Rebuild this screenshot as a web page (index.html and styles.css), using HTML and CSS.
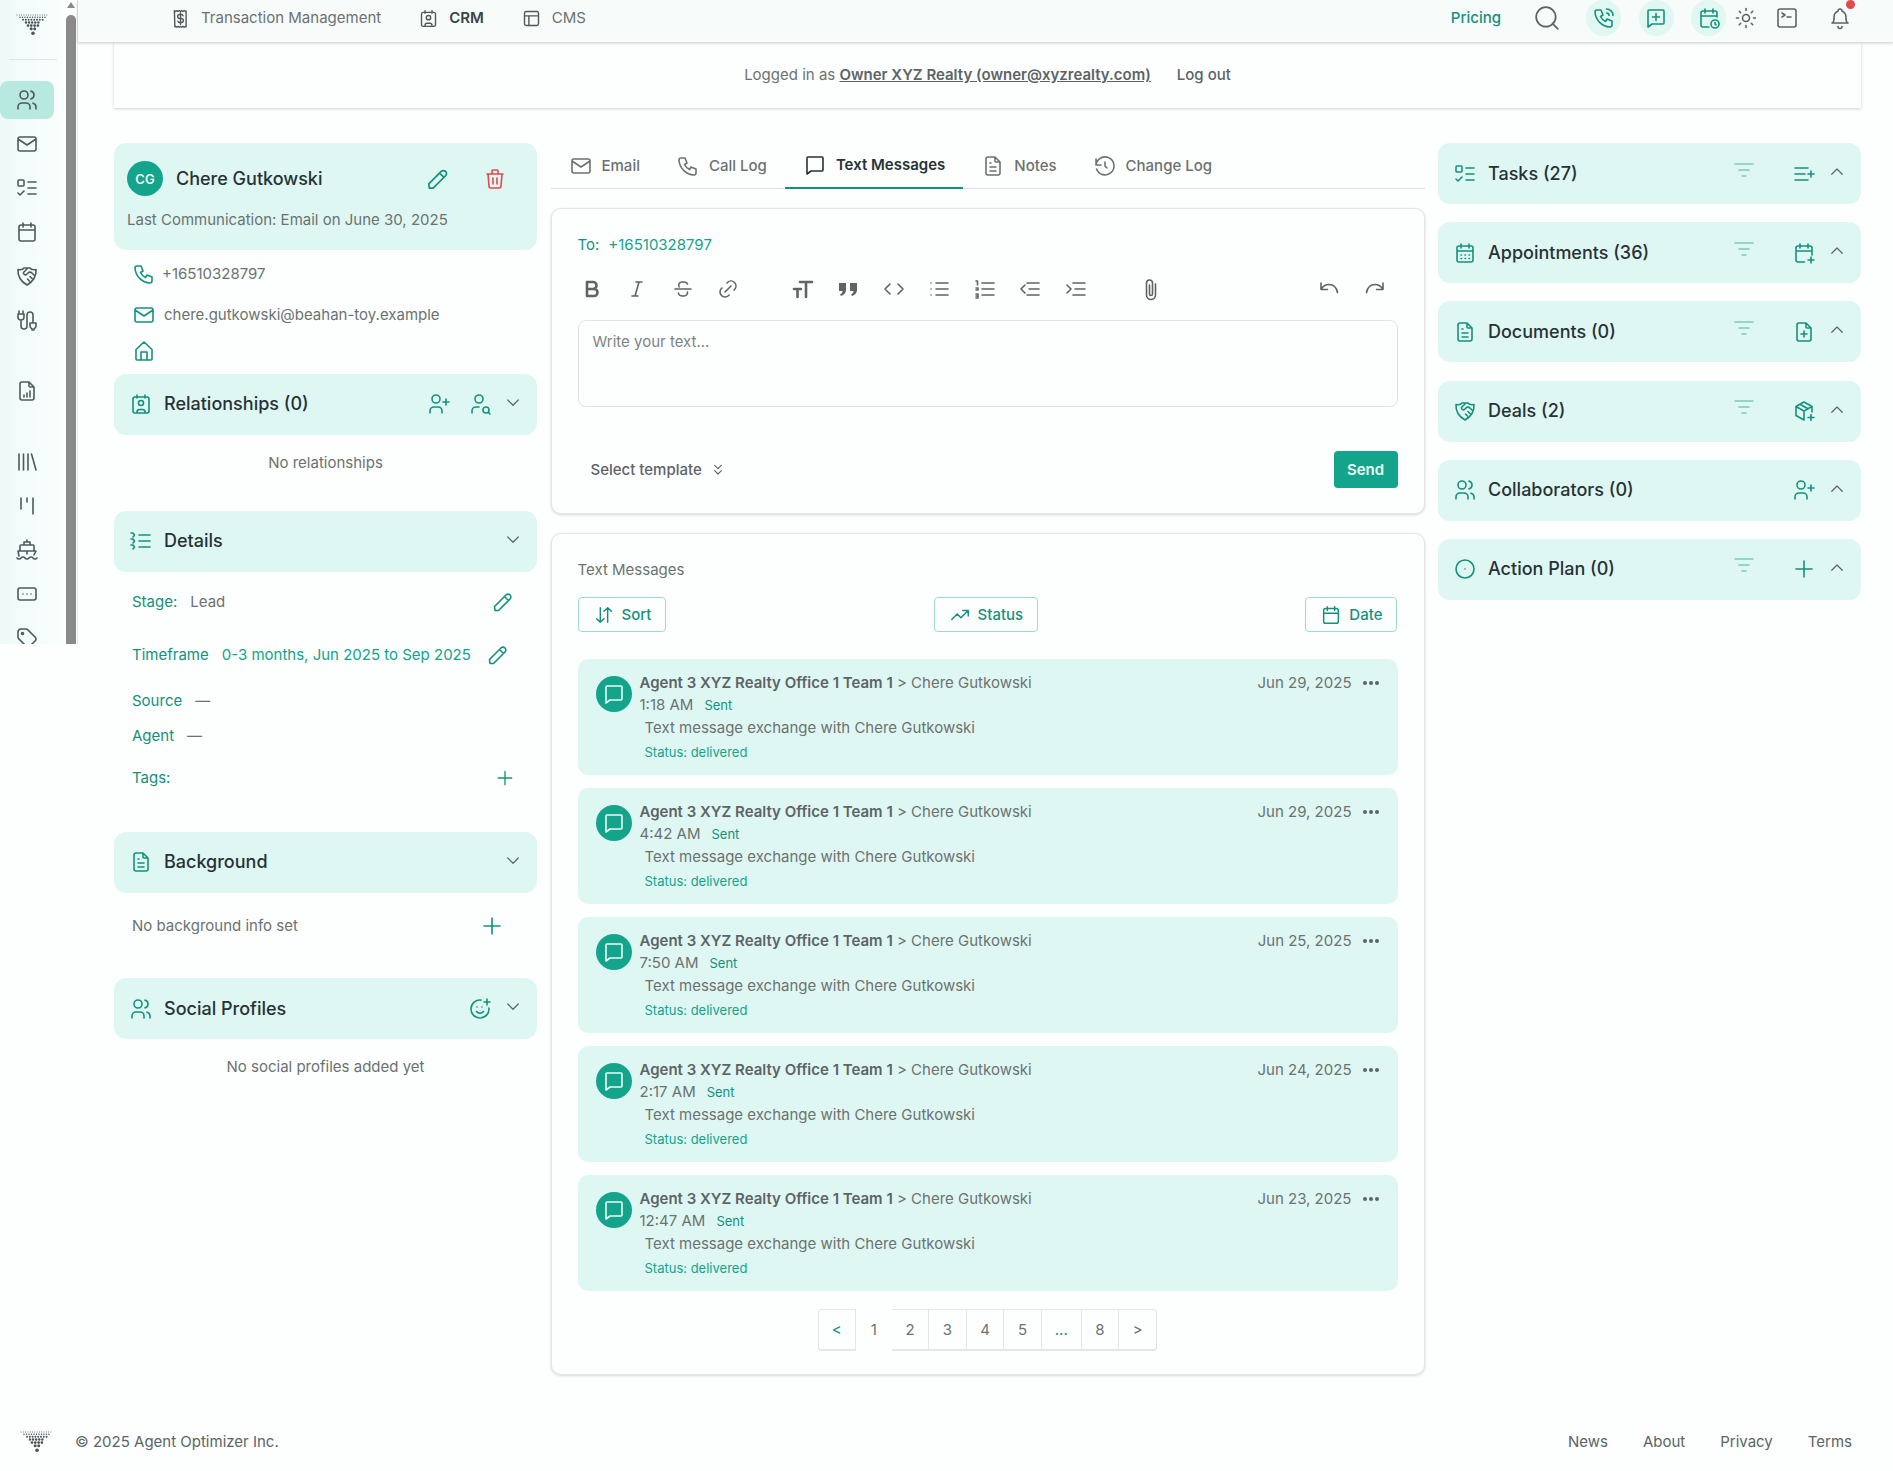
FILE: index.html
```html
<!DOCTYPE html>
<html lang="en">
<head>
    <meta charset="UTF-8">
    <meta name="viewport" content="width=device-width, initial-scale=1.0">
    <title>Chere Gutkowski - CRM</title>
    <link rel="stylesheet" href="styles.css">
</head>
<body>
    <!-- icon sprite -->
    <svg class="sprite" xmlns="http://www.w3.org/2000/svg">
        <symbol id="i-logo" viewBox="0 0 34 22">
            <g class="logo-dots">
                <path stroke-width="1" stroke-dasharray="0 2.3" d="M1 1H33"/>
                <path stroke-width="1.5" stroke-dasharray="0 2.5" d="M4 3.2H30"/>
                <path stroke-width="2" stroke-dasharray="0 2.8" d="M7 5.8H27.5"/>
                <path stroke-width="2.5" stroke-dasharray="0 3.1" d="M10 8.6H25"/>
                <path stroke-width="2.8" stroke-dasharray="0 3.3" d="M12 11.6H22.5"/>
                <path stroke-width="3" stroke-dasharray="0 3.5" d="M15.2 14.8H19"/>
                <path stroke-width="3.6" stroke-dasharray="0 4" d="M17 19.2H17.5"/>
            </g>
        </symbol>
        <symbol id="i-users" viewBox="0 0 24 24"><path d="M5 7a4 4 0 1 0 8 0a4 4 0 1 0 -8 0M3 21v-2a4 4 0 0 1 4 -4h4a4 4 0 0 1 4 4v2M16 3.13a4 4 0 0 1 0 7.75M21 21v-2a4 4 0 0 0 -3 -3.85"/></symbol>
        <symbol id="i-mail" viewBox="0 0 24 24"><path d="M3 7a2 2 0 0 1 2 -2h14a2 2 0 0 1 2 2v10a2 2 0 0 1 -2 2h-14a2 2 0 0 1 -2 -2v-10zM3 7l9 6l9 -6"/></symbol>
        <symbol id="i-tasks" viewBox="0 0 24 24"><path d="M4 4h4a1 1 0 0 1 1 1v4a1 1 0 0 1 -1 1h-4a1 1 0 0 1 -1 -1v-4a1 1 0 0 1 1 -1zM3 17l2 2l4 -4M13 6h8M13 12h8M13 18h8"/></symbol>
        <symbol id="i-calendar" viewBox="0 0 24 24"><path d="M4 7a2 2 0 0 1 2 -2h12a2 2 0 0 1 2 2v12a2 2 0 0 1 -2 2h-12a2 2 0 0 1 -2 -2v-12zM16 3v4M8 3v4M4 10h16"/></symbol>
        <symbol id="i-calendar-grid" viewBox="0 0 24 24"><path d="M4 7a2 2 0 0 1 2 -2h12a2 2 0 0 1 2 2v12a2 2 0 0 1 -2 2h-12a2 2 0 0 1 -2 -2v-12zM16 3v4M8 3v4M4 10h16M8 14h.5M12 14h.5M16 14h.5M8 17.500h.5M12 17.500h.5M16 17.500h.5"/></symbol>
        <symbol id="i-calendar-plus" viewBox="0 0 24 24"><path d="M12.500 21h-6.500a2 2 0 0 1 -2 -2v-12a2 2 0 0 1 2 -2h12a2 2 0 0 1 2 2v7M16 3v4M8 3v4M4 10h16M16 19h6M19 16v6"/></symbol>
        <symbol id="i-calendar-time" viewBox="0 0 24 24"><path d="M11.800 21h-5.800a2 2 0 0 1 -2 -2v-12a2 2 0 0 1 2 -2h12a2 2 0 0 1 2 2v4M14 18a4 4 0 1 0 8 0a4 4 0 1 0 -8 0M16 3v4M8 3v4M4 10h16M18 16.500v1.500l1 1"/></symbol>
        <symbol id="i-handshake" viewBox="0 0 24 24"><path d="M3 5.500c3 .5 5 0 6 -1.500h6c1 1.500 3 2 6 1.500c.5 7 -3 12 -9 15.500c-6 -3.500 -9.500 -8.500 -9 -15.500zM12 5l-3.300 3.300a1 1 0 0 0 0 1.400l.5 .5c.7 .7 1.800 .7 2.500 0l1 -1a3.200 3.200 0 0 1 4.500 0l1.800 1.800M12.500 15l2 2M15 12.500l2 2"/></symbol>
        <symbol id="i-route" viewBox="0 0 24 24"><path d="M4 3v3M8 3v3M3 6h6v3a3 3 0 0 1 -6 0zM6 12v6a3 3 0 0 0 6 0v-11a3 3 0 0 1 6 0v8M15 15h6v3a3 3 0 0 1 -2 2.800v1.200h-2v-1.200a3 3 0 0 1 -2 -2.800z"/></symbol>
        <symbol id="i-report" viewBox="0 0 24 24"><path d="M14 3v4a1 1 0 0 0 1 1h4M17 21h-10a2 2 0 0 1 -2 -2v-14a2 2 0 0 1 2 -2h7l5 5v11a2 2 0 0 1 -2 2zM9 18v-2M12 18v-4M15 18v-6"/></symbol>
        <symbol id="i-books" viewBox="0 0 24 24"><path d="M4 4v16M8.500 4v16M13 4v16M16.500 4l4.500 16"/></symbol>
        <symbol id="i-kanban" viewBox="0 0 24 24"><path d="M6 4v11M12 4v4M18 4v16"/></symbol>
        <symbol id="i-ship" viewBox="0 0 24 24"><path d="M2 20a2.400 2.400 0 0 0 2 1a2.400 2.400 0 0 0 2 -1a2.400 2.400 0 0 1 2 -1a2.400 2.400 0 0 1 2 1a2.400 2.400 0 0 0 2 1a2.400 2.400 0 0 0 2 -1a2.400 2.400 0 0 1 2 -1a2.400 2.400 0 0 1 2 1a2.400 2.400 0 0 0 2 1a2.400 2.400 0 0 0 2 -1M4 18l-1 -5h18l-2 4M5 13v-5a1 1 0 0 1 1 -1h12a1 1 0 0 1 1 1v5M9 7v-3h6v3M12 2v2M12 13v3"/></symbol>
        <symbol id="i-ticket" viewBox="0 0 24 24"><path d="M5 6h14a2 2 0 0 1 2 2v8a2 2 0 0 1 -2 2h-14a2 2 0 0 1 -2 -2v-8a2 2 0 0 1 2 -2zM8 12h.01M12 12h.01M16 12h.01"/></symbol>
        <symbol id="i-tag" viewBox="0 0 24 24"><path d="M6.500 7.500a1 1 0 1 0 2 0a1 1 0 1 0 -2 0M3 6v5.170a2 2 0 0 0 .590 1.410l7.710 7.710a2.410 2.410 0 0 0 3.410 0l5.590 -5.590a2.410 2.410 0 0 0 0 -3.410l-7.710 -7.710a2 2 0 0 0 -1.410 -.590h-5.170a3 3 0 0 0 -3 3z"/></symbol>
        <symbol id="i-receipt" viewBox="0 0 24 24"><path d="M5 3l1.400 1l1.400 -1l1.400 1l1.400 -1l1.400 1l1.400 -1l1.400 1l1.400 -1l1.400 1l.8 -.5v18l-.8 -.5l-1.400 1l-1.400 -1l-1.400 1l-1.400 -1l-1.400 1l-1.400 -1l-1.400 1l-1.400 -1l-.8 .5zM15 9a2 2 0 0 0 -2 -1.500h-2a2.200 2.200 0 0 0 0 4.500h2a2.200 2.200 0 0 1 0 4.500h-2a2 2 0 0 1 -2 -1.500M12 5.500v13"/></symbol>
        <symbol id="i-badge" viewBox="0 0 24 24"><path d="M6 5h12a2 2 0 0 1 2 2v12a2 2 0 0 1 -2 2h-12a2 2 0 0 1 -2 -2v-12a2 2 0 0 1 2 -2zM8 3v3M16 3v3M9.500 11a2.500 2.500 0 1 0 5 0a2.500 2.500 0 1 0 -5 0M8 21v-1a2.500 2.500 0 0 1 2.500 -2.500h3a2.500 2.500 0 0 1 2.500 2.500v1"/></symbol>
        <symbol id="i-layout" viewBox="0 0 24 24"><path d="M6 4h12a2 2 0 0 1 2 2v12a2 2 0 0 1 -2 2h-12a2 2 0 0 1 -2 -2v-12a2 2 0 0 1 2 -2zM4 9h16M9 9v11"/></symbol>
        <symbol id="i-search" viewBox="0 0 24 24"><path d="M2 11a9 9 0 1 0 18 0a9 9 0 1 0 -18 0M22 22l-5 -5"/></symbol>
        <symbol id="i-phone" viewBox="0 0 24 24"><path d="M5 4h4l2 5l-2.500 1.500a11 11 0 0 0 5 5l1.500 -2.500l5 2v4a2 2 0 0 1 -2 2a16 16 0 0 1 -15 -15a2 2 0 0 1 2 -2"/></symbol>
        <symbol id="i-phone-calling" viewBox="0 0 24 24"><path d="M5 4h4l2 5l-2.500 1.500a11 11 0 0 0 5 5l1.500 -2.500l5 2v4a2 2 0 0 1 -2 2a16 16 0 0 1 -15 -15a2 2 0 0 1 2 -2M14.500 3a6.500 6.500 0 0 1 6.500 6.500M14.500 7a2.500 2.500 0 0 1 2.500 2.500"/></symbol>
        <symbol id="i-message-plus" viewBox="0 0 24 24"><path d="M5 4h14a1 1 0 0 1 1 1v12a1 1 0 0 1 -1 1h-11l-4 3v-16a1 1 0 0 1 1 -1zM8.500 11h7M12 7.500v7"/></symbol>
        <symbol id="i-message" viewBox="0 0 24 24"><path d="M5 4h14a1 1 0 0 1 1 1v12a1 1 0 0 1 -1 1h-11l-4 3v-16a1 1 0 0 1 1 -1z"/></symbol>
        <symbol id="i-sun" viewBox="0 0 24 24"><path d="M8.500 12a3.500 3.500 0 1 0 7 0a3.500 3.500 0 1 0 -7 0M2.500 12h2M19.500 12h2M12 2.500v2M12 19.500v2M5.300 5.300l1.400 1.400M17.300 17.300l1.400 1.400M18.700 5.300l-1.400 1.400M6.700 17.300l-1.400 1.400"/></symbol>
        <symbol id="i-terminal" viewBox="0 0 24 24"><path d="M5 3h14a2 2 0 0 1 2 2v14a2 2 0 0 1 -2 2h-14a2 2 0 0 1 -2 -2v-14a2 2 0 0 1 2 -2zM7 7l3 2l-3 2M12 11h4"/></symbol>
        <symbol id="i-bell" viewBox="0 0 24 24"><path d="M10 5a2 2 0 1 1 4 0a7 7 0 0 1 4 6v3a4 4 0 0 0 2 3h-16a4 4 0 0 0 2 -3v-3a7 7 0 0 1 4 -6M10 20.500a2 2 0 0 0 4 0"/></symbol>
        <symbol id="i-pencil" viewBox="0 0 24 24"><path d="M4 20.500h3.500l11.500 -11.500a2.828 2.828 0 1 0 -4 -4l-11.500 11.500zM13.500 6.500l4 4"/></symbol>
        <symbol id="i-trash" viewBox="0 0 24 24"><path d="M4 7h16M10 11v6M14 11v6M5 7l1 12a2 2 0 0 0 2 2h8a2 2 0 0 0 2 -2l1 -12M9 7v-3a1 1 0 0 1 1 -1h4a1 1 0 0 1 1 1v3"/></symbol>
        <symbol id="i-home" viewBox="0 0 24 24"><path d="M4 10.500l8 -7.500l8 7.500v9.500a1 1 0 0 1 -1 1h-14a1 1 0 0 1 -1 -1zM9 21v-8h6v8"/></symbol>
        <symbol id="i-user-plus" viewBox="0 0 24 24"><path d="M5 7a4 4 0 1 0 8 0a4 4 0 1 0 -8 0M3 21v-2a4 4 0 0 1 4 -4h4a4 4 0 0 1 4 4v2M19 7v6M16 10h6"/></symbol>
        <symbol id="i-user-search" viewBox="0 0 24 24"><path d="M7 7a4 4 0 1 0 8 0a4 4 0 1 0 -8 0M4 21v-2a4 4 0 0 1 4 -4h3M15 18a3 3 0 1 0 6 0a3 3 0 1 0 -6 0M20.200 20.200l1.800 1.800"/></symbol>
        <symbol id="i-chevron-down" viewBox="0 0 24 24"><path d="M5 8l7 7l7 -7"/></symbol>
        <symbol id="i-chevron-up" viewBox="0 0 24 24"><path d="M5 15l7 -7l7 7"/></symbol>
        <symbol id="i-chevrons-down" viewBox="0 0 24 24"><path d="M7 5l5 5l5 -5M7 13l5 5l5 -5"/></symbol>
        <symbol id="i-list-numbers" viewBox="0 0 24 24"><path d="M10 6h11M10 12h11M10 18h11M2 4h2l1.500 2l-1.500 2M2 10h2l1.500 2l-1.500 2M2 16h2l1.500 2l-1.500 2"/></symbol>
        <symbol id="i-file" viewBox="0 0 24 24"><path d="M14 3v4a1 1 0 0 0 1 1h4M17 21h-10a2 2 0 0 1 -2 -2v-14a2 2 0 0 1 2 -2h7l5 5v11a2 2 0 0 1 -2 2zM9 9h1M9 13h6M9 17h6"/></symbol>
        <symbol id="i-file-plus" viewBox="0 0 24 24"><path d="M14 3v4a1 1 0 0 0 1 1h4M17 21h-10a2 2 0 0 1 -2 -2v-14a2 2 0 0 1 2 -2h7l5 5v11a2 2 0 0 1 -2 2zM12 11v6M9 14h6"/></symbol>
        <symbol id="i-mood-plus" viewBox="0 0 24 24"><path d="M13 3.100a9 9 0 1 0 7.900 7.900M9 10h.01M14 10h.01M8.500 14.500c.8 1.100 2.100 1.800 3.500 1.800s2.700 -.7 3.500 -1.800M16 5h6M19 2v6"/></symbol>
        <symbol id="i-filter" viewBox="0 0 24 24"><path d="M3 5h18M7 11h10M10 17h4"/></symbol>
        <symbol id="i-list-plus" viewBox="0 0 24 24"><path d="M3 6h13M3 12h10M3 18h13M16 12h6M19 9v6"/></symbol>
        <symbol id="i-package-plus" viewBox="0 0 24 24"><path d="M20 13v-5.500l-8 -4.500l-8 4.500v9l8 4.500M4 7.500l8 4.500l8 -4.500M12 12v9M8 5.200l8 4.500M16 18.500h6M19 15.500v6"/></symbol>
        <symbol id="i-circle-dot" viewBox="0 0 24 24"><path d="M3 12a9 9 0 1 0 18 0a9 9 0 1 0 -18 0M12 12h.01"/></symbol>
        <symbol id="i-plus" viewBox="0 0 24 24"><path d="M12 4v16M4 12h16"/></symbol>
        <symbol id="i-history" viewBox="0 0 24 24"><path d="M12 8v4l2 2M3.050 11a9 9 0 1 1 .5 4M3.050 5v6h5"/></symbol>
        <symbol id="i-bold" viewBox="0 0 24 24"><path d="M7 5h6a3.500 3.500 0 0 1 0 7h-6zM13 12h1a3.500 3.500 0 0 1 0 7h-7v-7"/></symbol>
        <symbol id="i-italic" viewBox="0 0 24 24"><path d="M11 5h6M7 19h6M14 5l-4 14"/></symbol>
        <symbol id="i-strike" viewBox="0 0 24 24"><path d="M4 12h16M16.500 7a4 2.500 0 0 0 -4 -2h-1.500a3.500 3.500 0 0 0 -3 5M7.500 16a4 3 0 0 0 4 3h1.500a3.500 3.500 0 0 0 3.500 -4"/></symbol>
        <symbol id="i-link" viewBox="0 0 24 24"><path d="M9 15l6 -6M11 6l.46 -.54a5 5 0 0 1 7.070 7.070l-.53 .47M13 18l-.4 .53a5.070 5.070 0 0 1 -7.130 0a4.970 4.970 0 0 1 0 -7.070l.53 -.46"/></symbol>
        <symbol id="i-text-size" viewBox="0 0 24 24"><path d="M9 5h12M15 5v15M3 12h7M6.500 12v8"/></symbol>
        <symbol id="i-quote" viewBox="0 0 24 24"><path class="solid" d="M3 6h7v7c0 3 -2 5 -5 6l-1 -1.500c1.500 -.7 2.500 -1.800 2.500 -3.500h-3.500zM14 6h7v7c0 3 -2 5 -5 6l-1 -1.500c1.500 -.7 2.500 -1.800 2.500 -3.500h-3.500z"/></symbol>
        <symbol id="i-code" viewBox="0 0 24 24"><path d="M8 7l-5 5l5 5M16 7l5 5l-5 5"/></symbol>
        <symbol id="i-ul" viewBox="0 0 24 24"><path d="M9 6h12M9 12h12M9 18h12M4 6h.01M4 12h.01M4 18h.01"/></symbol>
        <symbol id="i-ol" viewBox="0 0 24 24"><path d="M9 6h12M9 12h12M9 18h12M3 4h1.500v4M3 11h2v2h-2M3 17h2v4h-2M3 19h2"/></symbol>
        <symbol id="i-outdent" viewBox="0 0 24 24"><path d="M21 6h-12M21 12h-10M21 18h-12M7 8l-4 4l4 4"/></symbol>
        <symbol id="i-indent" viewBox="0 0 24 24"><path d="M21 6h-12M21 12h-10M21 18h-12M3 8l4 4l-4 4"/></symbol>
        <symbol id="i-clip" viewBox="0 0 24 24"><path d="M10.500 8v9a1.500 1.500 0 0 0 3 0v-11a3 3 0 0 0 -6 0v12a4.500 4.500 0 0 0 9 0v-11"/></symbol>
        <symbol id="i-undo" viewBox="0 0 24 24"><path d="M4 6v6.500h6.500M4 12.500c2 -3.500 5 -5 8 -5c4.500 0 7.500 3 8.500 8"/></symbol>
        <symbol id="i-redo" viewBox="0 0 24 24"><path d="M20 6v6.500h-6.500M20 12.500c-2 -3.500 -5 -5 -8 -5c-4.500 0 -7.500 3 -8.500 8"/></symbol>
        <symbol id="i-sort" viewBox="0 0 24 24"><path d="M8 4v16M4 16l4 4l4 -4M16 20v-16M12 8l4 -4l4 4"/></symbol>
        <symbol id="i-trend" viewBox="0 0 24 24"><path d="M3 17l6 -6l4 4l8 -8M15 7h6v6"/></symbol>
    </svg>

    <div class="app">
        <aside class="sidebar">
            <div class="side-rail">
                <div class="side-logo">
                    <svg class="logo"><use href="#i-logo"/></svg>
                </div>
                <nav class="side-nav">
                    <a class="side-item active"><svg class="icon"><use href="#i-users"/></svg></a>
                    <a class="side-item"><svg class="icon"><use href="#i-mail"/></svg></a>
                    <a class="side-item"><svg class="icon"><use href="#i-tasks"/></svg></a>
                    <a class="side-item"><svg class="icon"><use href="#i-calendar"/></svg></a>
                    <a class="side-item"><svg class="icon"><use href="#i-handshake"/></svg></a>
                    <a class="side-item"><svg class="icon"><use href="#i-route"/></svg></a>
                    <a class="side-item group-a"><svg class="icon"><use href="#i-report"/></svg></a>
                    <a class="side-item group-b"><svg class="icon"><use href="#i-books"/></svg></a>
                    <a class="side-item"><svg class="icon"><use href="#i-kanban"/></svg></a>
                    <a class="side-item"><svg class="icon"><use href="#i-ship"/></svg></a>
                    <a class="side-item"><svg class="icon"><use href="#i-ticket"/></svg></a>
                    <a class="side-item"><svg class="icon"><use href="#i-tag"/></svg></a>
                </nav>
            </div>
            <div class="side-scroll"><span class="scroll-arrow"></span><span class="scroll-thumb"></span></div>
        </aside>

        <div class="main">
            <header class="topbar">
                <nav class="top-nav">
                    <a class="top-link"><svg class="icon"><use href="#i-receipt"/></svg>Transaction Management</a>
                    <a class="top-link current"><svg class="icon"><use href="#i-badge"/></svg>CRM</a>
                    <a class="top-link"><svg class="icon"><use href="#i-layout"/></svg>CMS</a>
                </nav>
                <div class="top-actions">
                    <a class="pricing">Pricing</a>
                    <svg class="icon search-icon"><use href="#i-search"/></svg>
                    <span class="round-btn"><svg class="icon"><use href="#i-phone-calling"/></svg></span>
                    <span class="round-btn"><svg class="icon"><use href="#i-message-plus"/></svg></span>
                    <span class="round-btn"><svg class="icon"><use href="#i-calendar-time"/></svg></span>
                    <svg class="icon sun-icon"><use href="#i-sun"/></svg>
                    <svg class="icon term-icon"><use href="#i-terminal"/></svg>
                    <span class="bell"><svg class="icon"><use href="#i-bell"/></svg><span class="bell-dot"></span></span>
                </div>
            </header>

            <div class="login-bar">
                <span>Logged in as <a class="login-user">Owner XYZ Realty (owner@xyzrealty.com)</a></span>
                <a class="logout">Log out</a>
            </div>

            <div class="columns">
                <!-- left column -->
                <section class="col">
                    <div class="profile">
                        <div class="profile-top">
                            <span class="avatar">CG</span>
                            <h1 class="profile-name">Chere Gutkowski</h1>
                            <svg class="icon act pencil"><use href="#i-pencil"/></svg>
                            <svg class="icon act trash"><use href="#i-trash"/></svg>
                        </div>
                        <p class="last-comm">Last Communication: Email on June 30, 2025</p>
                    </div>
                    <div class="contact">
                        <div class="contact-row phone"><svg class="icon act"><use href="#i-phone"/></svg>+16510328797</div>
                        <div class="contact-row mail"><svg class="icon act"><use href="#i-mail"/></svg>chere.gutkowski@beahan-toy.example</div>
                        <div class="contact-row home"><svg class="icon act"><use href="#i-home"/></svg></div>
                    </div>

                    <div class="panel-head">
                        <svg class="icon act head-icon"><use href="#i-badge"/></svg>
                        <h2 class="panel-title">Relationships (0)</h2>
                        <svg class="icon act tool"><use href="#i-user-plus"/></svg>
                        <svg class="icon act tool"><use href="#i-user-search"/></svg>
                        <svg class="icon chev"><use href="#i-chevron-down"/></svg>
                    </div>
                    <p class="empty rel-empty">No relationships</p>

                    <div class="panel-head">
                        <svg class="icon act head-icon"><use href="#i-list-numbers"/></svg>
                        <h2 class="panel-title">Details</h2>
                        <svg class="icon chev"><use href="#i-chevron-down"/></svg>
                    </div>
                    <div class="details">
                        <div class="detail stage"><span class="label">Stage:</span><span class="value">Lead</span><svg class="icon act edit"><use href="#i-pencil"/></svg></div>
                        <div class="detail frame"><span class="label">Timeframe</span><span class="value teal">0-3 months, Jun 2025 to Sep 2025</span><svg class="icon act edit"><use href="#i-pencil"/></svg></div>
                        <div class="detail source"><span class="label">Source</span><span class="value">—</span></div>
                        <div class="detail agent"><span class="label">Agent</span><span class="value">—</span></div>
                        <div class="detail tags"><span class="label">Tags:</span><svg class="icon act tag-add"><use href="#i-plus"/></svg></div>
                    </div>

                    <div class="panel-head">
                        <svg class="icon act head-icon"><use href="#i-file"/></svg>
                        <h2 class="panel-title">Background</h2>
                        <svg class="icon chev"><use href="#i-chevron-down"/></svg>
                    </div>
                    <div class="bg-info">
                        <span>No background info set</span>
                        <svg class="icon act bg-add"><use href="#i-plus"/></svg>
                    </div>

                    <div class="panel-head">
                        <svg class="icon act head-icon"><use href="#i-users"/></svg>
                        <h2 class="panel-title">Social Profiles</h2>
                        <svg class="icon act tool"><use href="#i-mood-plus"/></svg>
                        <svg class="icon chev"><use href="#i-chevron-down"/></svg>
                    </div>
                    <p class="empty">No social profiles added yet</p>
                </section>

                <!-- middle column -->
                <section class="col">
                    <nav class="tabs">
                        <a class="tab"><svg class="icon"><use href="#i-mail"/></svg>Email</a>
                        <a class="tab"><svg class="icon"><use href="#i-phone"/></svg>Call Log</a>
                        <a class="tab active"><svg class="icon"><use href="#i-message"/></svg>Text Messages</a>
                        <a class="tab"><svg class="icon"><use href="#i-file"/></svg>Notes</a>
                        <a class="tab"><svg class="icon"><use href="#i-history"/></svg>Change Log</a>
                    </nav>

                    <div class="card compose">
                        <div class="to-line">To:<span>+16510328797</span></div>
                        <div class="toolbar">
                            <svg class="icon tb bold"><use href="#i-bold"/></svg>
                            <svg class="icon tb"><use href="#i-italic"/></svg>
                            <svg class="icon tb"><use href="#i-strike"/></svg>
                            <svg class="icon tb"><use href="#i-link"/></svg>
                            <svg class="icon tb bold group-start"><use href="#i-text-size"/></svg>
                            <svg class="icon tb"><use href="#i-quote"/></svg>
                            <svg class="icon tb"><use href="#i-code"/></svg>
                            <svg class="icon tb"><use href="#i-ul"/></svg>
                            <svg class="icon tb"><use href="#i-ol"/></svg>
                            <svg class="icon tb"><use href="#i-outdent"/></svg>
                            <svg class="icon tb"><use href="#i-indent"/></svg>
                            <svg class="icon tb clip"><use href="#i-clip"/></svg>
                            <svg class="icon tb undo"><use href="#i-undo"/></svg>
                            <svg class="icon tb"><use href="#i-redo"/></svg>
                        </div>
                        <div class="textbox">Write your text...</div>
                        <div class="compose-foot">
                            <a class="template">Select template<svg class="icon"><use href="#i-chevrons-down"/></svg></a>
                            <button class="send">Send</button>
                        </div>
                    </div>

                    <div class="card list-card">
                        <div class="list-title">Text Messages</div>
                        <div class="filters">
                            <button class="filter-btn"><svg class="icon"><use href="#i-sort"/></svg>Sort</button>
                            <button class="filter-btn"><svg class="icon"><use href="#i-trend"/></svg>Status</button>
                            <button class="filter-btn"><svg class="icon"><use href="#i-calendar"/></svg>Date</button>
                        </div>
                        <div class="msgs">
                            <article class="msg">
                                <span class="msg-avatar"><svg class="icon"><use href="#i-message"/></svg></span>
                                <div class="msg-main">
                                    <div class="msg-top"><span class="msg-from"><b>Agent 3 XYZ Realty Office 1 Team 1</b> &gt; Chere Gutkowski</span><span class="msg-date">Jun 29, 2025</span><span class="dots"><i></i><i></i><i></i></span></div>
                                    <div class="msg-time">1:18 AM<span>Sent</span></div>
                                    <p class="msg-body">Text message exchange with Chere Gutkowski</p>
                                    <p class="msg-status">Status: delivered</p>
                                </div>
                            </article>
                            <article class="msg">
                                <span class="msg-avatar"><svg class="icon"><use href="#i-message"/></svg></span>
                                <div class="msg-main">
                                    <div class="msg-top"><span class="msg-from"><b>Agent 3 XYZ Realty Office 1 Team 1</b> &gt; Chere Gutkowski</span><span class="msg-date">Jun 29, 2025</span><span class="dots"><i></i><i></i><i></i></span></div>
                                    <div class="msg-time">4:42 AM<span>Sent</span></div>
                                    <p class="msg-body">Text message exchange with Chere Gutkowski</p>
                                    <p class="msg-status">Status: delivered</p>
                                </div>
                            </article>
                            <article class="msg">
                                <span class="msg-avatar"><svg class="icon"><use href="#i-message"/></svg></span>
                                <div class="msg-main">
                                    <div class="msg-top"><span class="msg-from"><b>Agent 3 XYZ Realty Office 1 Team 1</b> &gt; Chere Gutkowski</span><span class="msg-date">Jun 25, 2025</span><span class="dots"><i></i><i></i><i></i></span></div>
                                    <div class="msg-time">7:50 AM<span>Sent</span></div>
                                    <p class="msg-body">Text message exchange with Chere Gutkowski</p>
                                    <p class="msg-status">Status: delivered</p>
                                </div>
                            </article>
                            <article class="msg">
                                <span class="msg-avatar"><svg class="icon"><use href="#i-message"/></svg></span>
                                <div class="msg-main">
                                    <div class="msg-top"><span class="msg-from"><b>Agent 3 XYZ Realty Office 1 Team 1</b> &gt; Chere Gutkowski</span><span class="msg-date">Jun 24, 2025</span><span class="dots"><i></i><i></i><i></i></span></div>
                                    <div class="msg-time">2:17 AM<span>Sent</span></div>
                                    <p class="msg-body">Text message exchange with Chere Gutkowski</p>
                                    <p class="msg-status">Status: delivered</p>
                                </div>
                            </article>
                            <article class="msg">
                                <span class="msg-avatar"><svg class="icon"><use href="#i-message"/></svg></span>
                                <div class="msg-main">
                                    <div class="msg-top"><span class="msg-from"><b>Agent 3 XYZ Realty Office 1 Team 1</b> &gt; Chere Gutkowski</span><span class="msg-date">Jun 23, 2025</span><span class="dots"><i></i><i></i><i></i></span></div>
                                    <div class="msg-time">12:47 AM<span>Sent</span></div>
                                    <p class="msg-body">Text message exchange with Chere Gutkowski</p>
                                    <p class="msg-status">Status: delivered</p>
                                </div>
                            </article>
                        </div>
                        <div class="pager">
                            <a class="page prev">&lt;</a>
                            <a class="page now">1</a>
                            <a class="page">2</a>
                            <a class="page">3</a>
                            <a class="page">4</a>
                            <a class="page">5</a>
                            <a class="page gap">...</a>
                            <a class="page">8</a>
                            <a class="page next">&gt;</a>
                        </div>
                    </div>
                </section>

                <!-- right column -->
                <section class="col side-list">
                    <div class="panel-head">
                        <svg class="icon act head-icon"><use href="#i-tasks"/></svg>
                        <h2 class="panel-title">Tasks (27)</h2>
                        <svg class="icon filter"><use href="#i-filter"/></svg>
                        <svg class="icon act add"><use href="#i-list-plus"/></svg>
                        <svg class="icon chev"><use href="#i-chevron-up"/></svg>
                    </div>
                    <div class="panel-head">
                        <svg class="icon act head-icon"><use href="#i-calendar-grid"/></svg>
                        <h2 class="panel-title">Appointments (36)</h2>
                        <svg class="icon filter"><use href="#i-filter"/></svg>
                        <svg class="icon act add"><use href="#i-calendar-plus"/></svg>
                        <svg class="icon chev"><use href="#i-chevron-up"/></svg>
                    </div>
                    <div class="panel-head">
                        <svg class="icon act head-icon"><use href="#i-file"/></svg>
                        <h2 class="panel-title">Documents (0)</h2>
                        <svg class="icon filter"><use href="#i-filter"/></svg>
                        <svg class="icon act add"><use href="#i-file-plus"/></svg>
                        <svg class="icon chev"><use href="#i-chevron-up"/></svg>
                    </div>
                    <div class="panel-head">
                        <svg class="icon act head-icon"><use href="#i-handshake"/></svg>
                        <h2 class="panel-title">Deals (2)</h2>
                        <svg class="icon filter"><use href="#i-filter"/></svg>
                        <svg class="icon act add"><use href="#i-package-plus"/></svg>
                        <svg class="icon chev"><use href="#i-chevron-up"/></svg>
                    </div>
                    <div class="panel-head">
                        <svg class="icon act head-icon"><use href="#i-users"/></svg>
                        <h2 class="panel-title">Collaborators (0)</h2>
                        <svg class="icon act add"><use href="#i-user-plus"/></svg>
                        <svg class="icon chev"><use href="#i-chevron-up"/></svg>
                    </div>
                    <div class="panel-head">
                        <svg class="icon act head-icon"><use href="#i-circle-dot"/></svg>
                        <h2 class="panel-title">Action Plan (0)</h2>
                        <svg class="icon filter"><use href="#i-filter"/></svg>
                        <svg class="icon act add"><use href="#i-plus"/></svg>
                        <svg class="icon chev"><use href="#i-chevron-up"/></svg>
                    </div>
                </section>
            </div>
        </div>
    </div>

    <footer class="footer">
        <svg class="logo foot-logo"><use href="#i-logo"/></svg>
        <span class="copy">© 2025 Agent Optimizer Inc.</span>
        <nav class="foot-links">
            <a>News</a>
            <a>About</a>
            <a>Privacy</a>
            <a>Terms</a>
        </nav>
    </footer>
</body>
</html>
```

FILE: styles.css
```css
* {
    box-sizing: border-box;
}

body {
    margin: 0;
    height: 1471px;
    overflow: hidden;
    background: #fcfffe;
    color: #6b7270;
    font-family: Inter, "Noto Sans", sans-serif;
    font-size: 15px;
    line-height: 20px;
}

h1, h2, p {
    margin: 0;
    font: inherit;
}

.sprite {
    display: none;
}

.icon {
    display: block;
    flex: none;
    width: 24px;
    height: 24px;
    fill: none;
    stroke: currentColor;
    stroke-width: 1.6;
    stroke-linecap: round;
    stroke-linejoin: round;
}

.solid {
    fill: currentColor;
    stroke: none;
}

.logo {
    display: block;
    width: 34px;
    height: 22px;
}

.logo-dots {
    fill: none;
    stroke: #4a5358;
    stroke-linecap: round;
}

.act {
    color: #14917c;
}

.app {
    display: flex;
    height: 1420px;
}

/* sidebar */
.sidebar {
    display: flex;
    flex: none;
    width: 78px;
    height: 644px;
    border-right: 1px solid #e6eaea;
}

.side-rail {
    width: 66px;
    background: linear-gradient(90deg, #eefaf8, #fbfffe);
    overflow: hidden;
}

.side-logo {
    height: 60px;
    margin: 0 9px 18px;
    padding-top: 14px;
    border-bottom: 1px solid #dfe5e4;
    display: flex;
    justify-content: center;
}

.side-nav {
    display: flex;
    flex-direction: column;
}

.side-item {
    display: flex;
    align-items: center;
    justify-content: center;
    width: 54px;
    height: 44px;
    color: #4e5a5c;
}

.side-item.active {
    height: 38px;
    margin: 3px 0;
    background: #b8e9e0;
    border-radius: 8px;
}

.side-item.group-a {
    margin-top: 27px;
}

.side-item.group-b {
    margin-top: 27px;
}

.side-scroll {
    position: relative;
    width: 10px;
}

.scroll-arrow {
    position: absolute;
    top: 2px;
    left: 1px;
    border: 4px solid transparent;
    border-top: 0;
    border-bottom: 6px solid #8a8a8a;
}

.scroll-thumb {
    position: absolute;
    top: 15px;
    bottom: 0;
    left: 0;
    width: 10px;
    background: #8a8a8a;
    border-radius: 5px 5px 0 0;
}

/* top bar */
.main {
    flex: 1;
    min-width: 0;
}

.topbar {
    position: relative;
    z-index: 2;
    display: flex;
    align-items: center;
    height: 42px;
    padding: 0 41px 6px 92px;
    background: #f7fbfa;
    box-shadow: 0 1px 3px rgba(0, 0, 0, 0.22);
}

.top-nav {
    display: flex;
    gap: 37px;
}

.top-link {
    display: flex;
    align-items: center;
    gap: 10px;
    color: #6b7270;
}

.top-link .icon {
    width: 21px;
    height: 21px;
    color: #4e5a5c;
}

.top-link.current {
    color: #3a4447;
    font-weight: 600;
}

.top-actions {
    display: flex;
    align-items: center;
    margin-left: auto;
}

.pricing {
    color: #14917c;
    font-weight: 500;
    margin-right: 33px;
}

.search-icon {
    width: 26px;
    height: 26px;
    margin-right: 26px;
    color: #5c6466;
}

.round-btn {
    display: flex;
    align-items: center;
    justify-content: center;
    width: 35px;
    height: 36px;
    margin-right: 17.500px;
    background: #e0f7f2;
    border-radius: 50%;
    color: #14917c;
}

.round-btn:nth-of-type(3) {
    margin-right: 8px;
}

.sun-icon {
    color: #5c6466;
    margin-right: 17px;
}

.term-icon {
    color: #5c6466;
    margin-right: 29px;
}

.bell {
    position: relative;
    color: #5c6466;
}

.bell-dot {
    position: absolute;
    top: -6px;
    right: -3px;
    width: 9px;
    height: 9px;
    background: #e5484d;
    border-radius: 50%;
}

.login-bar {
    display: flex;
    align-items: center;
    justify-content: center;
    gap: 26px;
    height: 66px;
    margin: 0 32px 35px 36px;
    background: #fdfffe;
    box-shadow: 0 1px 3px rgba(0, 0, 0, 0.18);
}

.login-user {
    color: #5b6466;
    font-weight: 600;
    text-decoration: underline;
}

.logout {
    color: #5b6466;
    font-weight: 500;
}

/* three columns */
.columns {
    display: grid;
    grid-template-columns: 423px 874px 423px;
    column-gap: 13.500px;
    align-items: start;
    padding-left: 36px;
}

.col {
    min-width: 0;
}

.side-list {
    display: flex;
    flex-direction: column;
    gap: 18.200px;
}

.profile {
    height: 106.500px;
    padding: 18px 14px 0 13px;
    background: #dff7f3;
    border-radius: 12px;
}

.profile-top {
    display: flex;
    align-items: center;
}

.avatar {
    display: flex;
    align-items: center;
    justify-content: center;
    flex: none;
    width: 36px;
    height: 35px;
    margin-right: 13px;
    background: #14a38b;
    border-radius: 50%;
    color: #e8fbf7;
    font-size: 13px;
    font-weight: 600;
}

.profile-name {
    flex: 1;
    color: #273236;
    font-size: 18px;
    font-weight: 500;
}

.pencil {
    width: 26px;
    height: 26px;
    margin-right: 32px;
}

.trash {
    width: 24px;
    height: 24px;
    margin-right: 16px;
    color: #e5484d;
}

.last-comm {
    margin-top: 14px;
}

.contact {
    height: 124px;
    padding: 14px 0 0 18px;
}

.contact-row {
    display: flex;
    align-items: center;
    gap: 6px;
    height: 20px;
}

.contact-row .icon {
    width: 24px;
    height: 24px;
}

.contact-row.mail {
    margin-top: 21px;
    gap: 8px;
}

.contact-row.home {
    margin-top: 16px;
}

.panel-head {
    display: flex;
    align-items: center;
    height: 61px;
    padding: 0 15px;
    background: #dff7f3;
    border-radius: 12px;
}

.head-icon {
    margin-right: 11px;
}

.panel-title {
    flex: 1;
    color: #273236;
    font-size: 18px;
    font-weight: 500;
}

.tool {
    margin-left: 17px;
}

.chev {
    width: 18px;
    height: 18px;
    margin-left: 12px;
    margin-bottom: 3px;
    color: #5c6466;
}

.filter {
    margin-right: 19px;
    margin-bottom: 6px;
    color: #7dcabb;
}

.add {
    margin-left: 17px;
}

.empty {
    padding-top: 18px;
    text-align: center;
}

.rel-empty {
    height: 76px;
}

.details {
    height: 260px;
    padding: 16px 22px 0 18px;
}

.detail {
    display: flex;
    align-items: center;
}

.detail .label {
    flex: none;
    color: #14917c;
}

.detail .value {
    flex: 1;
}

.detail .teal {
    color: #14a38b;
    margin-left: 13px;
    line-height: 22px;
}

.stage {
    height: 28px;
}

.stage .value {
    margin-left: 13px;
}

.edit {
    margin-left: 8px;
}

.frame {
    height: 44px;
    margin-top: 17px;
    padding-right: 5px;
}

.source,
.agent {
    height: 22px;
    margin-top: 13px;
}

.source .value,
.agent .value {
    margin-left: 13px;
}

.tags {
    justify-content: space-between;
    height: 28px;
    margin-top: 17px;
}

.tag-add {
    width: 20px;
    height: 20px;
}

.bg-info {
    display: flex;
    align-items: center;
    justify-content: space-between;
    height: 85.500px;
    padding: 0 33px 19px 18px;
}

/* tabs */
.tabs {
    display: flex;
    height: 46px;
    border-bottom: 1px solid #dde2e1;
}

.tab {
    display: flex;
    align-items: center;
    gap: 9px;
    height: 46px;
    padding: 0 18px;
    color: #6b7270;
    font-weight: 500;
}

.tab:first-child {
    margin-left: 0;
}

.tab.active {
    color: #273236;
    font-weight: 600;
    border-bottom: 2px solid #14917c;
}

.card {
    margin-top: 19px;
    padding: 0 26px;
    background: #fdfffe;
    border: 1px solid #e3e6e5;
    border-radius: 10px;
    box-shadow: 0 1px 3px rgba(0, 0, 0, 0.16);
}

.compose {
    height: 306px;
}

.to-line {
    display: flex;
    gap: 9px;
    margin-top: 26px;
    color: #14917c;
}

.to-line span {
    color: #14a38b;
}

.toolbar {
    display: flex;
    align-items: center;
    height: 32px;
    margin-top: 18px;
    padding-left: 2px;
}

.tb {
    margin-right: 21.500px;
    color: #5c6466;
}

.bold {
    stroke-width: 2.600;
}

.group-start {
    margin-left: 29px;
}

.clip {
    margin-left: 30px;
    margin-right: 0;
}

.undo {
    margin-left: auto;
}

.tb:last-child {
    margin-right: 0;
    margin-right: 11px;
}

.textbox {
    height: 87px;
    margin-top: 15px;
    padding: 11px 14px;
    border: 1px solid #dfe3e2;
    border-radius: 8px;
    color: #7d8482;
}

.compose-foot {
    display: flex;
    align-items: center;
    justify-content: space-between;
    margin-top: 44px;
}

.template {
    display: flex;
    align-items: center;
    gap: 8px;
    padding-left: 13px;
    color: #5c6466;
    font-weight: 500;
}

.template .icon {
    width: 16px;
    height: 16px;
}

.send {
    width: 64px;
    height: 37px;
    background: #14a38b;
    border: 0;
    border-radius: 4px;
    color: #eafbf8;
    font: inherit;
    font-weight: 600;
}

.list-card {
    height: 842px;
}

.list-title {
    margin-top: 26px;
}

.filters {
    display: flex;
    justify-content: space-between;
    margin-top: 17px;
}

.filter-btn {
    display: flex;
    align-items: center;
    gap: 7px;
    height: 35px;
    padding: 0 14px;
    background: #fdfffe;
    border: 1px solid #9edacd;
    border-radius: 4px;
    color: #14917c;
    font: inherit;
    font-weight: 500;
}

.filter-btn .icon {
    width: 22px;
    height: 22px;
}

.msgs {
    display: flex;
    flex-direction: column;
    gap: 13px;
    margin-top: 27px;
}

.msg {
    display: flex;
    height: 116px;
    padding: 13px 19px 0 18px;
    background: #dff7f3;
    border-radius: 10px;
}

.msg-avatar {
    display: flex;
    align-items: center;
    justify-content: center;
    flex: none;
    width: 36px;
    height: 36px;
    margin: 4px 8px 0 0;
    background: #14a38b;
    border-radius: 50%;
    color: #e8fbf7;
}

.msg-main {
    flex: 1;
    min-width: 0;
}

.msg-top {
    display: flex;
    align-items: center;
    height: 22px;
}

.msg-from {
    flex: 1;
}

.msg-from b {
    color: #5c6466;
    font-weight: 600;
}

.dots {
    display: flex;
    gap: 2px;
    margin-left: 11px;
}

.dots i {
    width: 4px;
    height: 4px;
    background: #5c6466;
    border-radius: 50%;
}

.msg-time {
    height: 22px;
    line-height: 22px;
}

.msg-time span {
    margin-left: 11px;
    color: #14917c;
    font-size: 13px;
}

.msg-body {
    height: 22px;
    margin: 1px 0 0 5px;
    line-height: 22px;
}

.msg-status {
    margin: 3px 0 0 5px;
    color: #14a38b;
    font-size: 13px;
}

.pager {
    display: flex;
    justify-content: center;
    margin-top: 18px;
}

.page {
    display: flex;
    align-items: center;
    justify-content: center;
    width: 37.500px;
    height: 42px;
    background: #fdfffe;
    border: 1px solid #e3e6e5;
    border-left-width: 0;
    border-bottom-width: 2px;
}

.page.prev {
    width: 38px;
    color: #14917c;
    border-left-width: 1px;
    border-radius: 4px 0 0 4px;
}

.page.now {
    width: 36px;
    border-width: 0;
}

.page.gap {
    width: 40px;
    color: #14917c;
}

.page.next {
    width: 38px;
    border-radius: 0 4px 4px 0;
}

/* footer */
.footer {
    display: flex;
    align-items: center;
    height: 51px;
    padding: 0 41px 8px 20px;
}

.copy {
    margin-left: 21px;
    color: #5b6466;
}

.foot-links {
    display: flex;
    gap: 35px;
    margin-left: auto;
    color: #5b6466;
}
```
